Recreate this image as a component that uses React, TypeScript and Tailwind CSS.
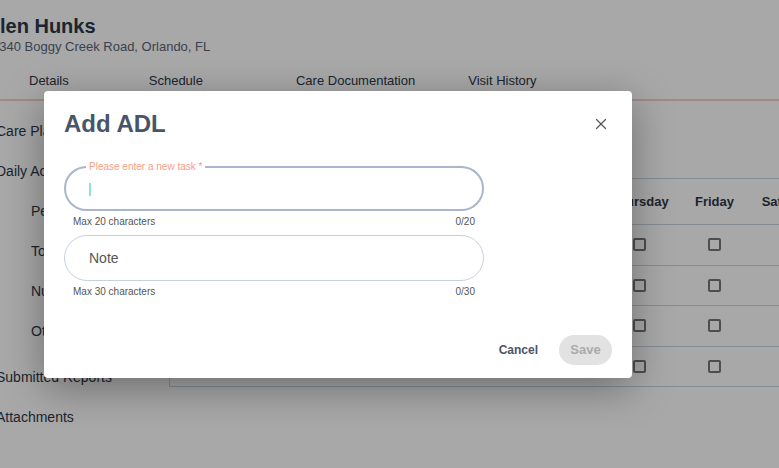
import { X } from "lucide-react";

const days = ["Sunday", "Monday", "Tuesday", "Wednesday", "Thursday", "Friday", "Saturday"];
const tasks = ["Personal Care", "Toileting", "Nutrition", "Other"];

function Checkbox() {
  return <span className="inline-block w-[13px] h-[13px] border-2 border-[#777] rounded-[2px] bg-white" />;
}

export default function App() {
  return (
    <div
      className="relative w-[779px] h-[468px] overflow-hidden bg-white text-[#2d3748]"
      style={{ fontFamily: '"Liberation Sans", Arial, sans-serif' }}
    >
      {/* page behind the modal */}
      <div className="ml-[-16px] pt-[13px]">
        <h1 className="ml-[-4px] text-[20px] font-bold leading-[26px] text-[#2d3748]">Allen Hunks</h1>
        <p className="ml-[8px] text-[13px] leading-[16px] text-[#5a6478]">2340 Boggy Creek Road, Orlando, FL</p>
        <div className="flex mt-[14px] ml-[16px] text-[13px] text-[#2d3748] h-[24px] items-center">
          <span className="ml-[29px]">Details</span>
          <span className="ml-[80px]">Schedule</span>
          <span className="ml-[93px]">Care Documentation</span>
          <span className="ml-[53px]">Visit History</span>
        </div>
      </div>
      <div className="mt-[6px] h-[2px] bg-[#f4d0cc]" />
      <div className="flex items-start">
        <div className="w-[173px] shrink-0 ml-[-4px] text-[14px] text-[#2d3748] whitespace-nowrap">
          <div className="h-[40px] flex items-center mt-[10px]">Care Plan</div>
          <div className="h-[40px] flex items-center">Daily Activities</div>
          {tasks.map((t) => (
            <div key={t} className="h-[40px] flex items-center pl-[35px]">
              {t}
            </div>
          ))}
          <div className="h-[40px] flex items-center mt-[6px]">Submitted Reports</div>
          <div className="h-[40px] flex items-center">Attachments</div>
        </div>
        <div className="mt-[77px] border-l border-[#cbd5e1] w-[800px] shrink-0">
          <div className="flex h-[47px] items-center border-t border-b border-[#cbd5e1] text-[13px] font-bold text-[#2d3748]">
            <div className="w-[132px]">Task</div>
            {days.map((d) => (
              <div key={d} className="w-[75px] text-center">
                {d}
              </div>
            ))}
          </div>
          {tasks.map((t) => (
            <div key={t} className="flex h-[40.5px] items-center border-b border-[#cbd5e1]">
              <div className="w-[132px] pl-3 text-[13px]">{t}</div>
              {days.map((d) => (
                <div key={d} className="w-[75px] flex justify-center">
                  <Checkbox />
                </div>
              ))}
            </div>
          ))}
        </div>
      </div>

      {/* overlay */}
      <div className="absolute inset-0 bg-black/[0.34]">
        <div className="absolute left-[44px] top-[91px] w-[588px] h-[287px] bg-white rounded-[4px] shadow-[0_10px_40px_rgba(0,0,0,0.35)] px-[20px] pt-[16px]">
          <div className="flex items-center justify-between">
            <h2 className="text-[24px] font-bold leading-[34px] text-[#475569]">Add ADL</h2>
            <X size={18} strokeWidth={1.6} className="text-[#555] mr-[2px]" />
          </div>

          <div className="w-[420px] mt-[25px]">
            <div className="relative h-[45px] rounded-full border-2 border-[#a9b6cb] flex items-center px-[23px]">
              <span className="absolute -top-[7px] left-[20px] bg-white px-[3px] text-[10px] leading-[12px] text-[#f79e86]">
                Please enter a new task *
              </span>
              <span className="w-[2px] h-[13px] bg-[#8de3d4] mt-[2px]" />
            </div>
            <div className="flex justify-between px-[9px] mt-[4px] text-[10px] leading-[13px] text-[#555]">
              <span>Max 20 characters</span>
              <span>0/20</span>
            </div>

            <div className="mt-[7px] h-[46px] rounded-full border border-[#c6d0e0] flex items-center px-[24px] text-[14px] text-[#555]">
              Note
            </div>
            <div className="flex justify-between px-[9px] mt-[4px] text-[10px] leading-[13px] text-[#555]">
              <span>Max 30 characters</span>
              <span>0/30</span>
            </div>
          </div>

          <div className="flex justify-end items-center mt-[37px] gap-[21px]">
            <span className="text-[12px] font-bold text-[#4a5568]">Cancel</span>
            <span className="h-[30px] w-[53px] rounded-full bg-[#e2e2e2] flex items-center justify-center text-[13px] font-bold text-[#aaa]">
              Save
            </span>
          </div>
        </div>
      </div>
    </div>
  );
}
